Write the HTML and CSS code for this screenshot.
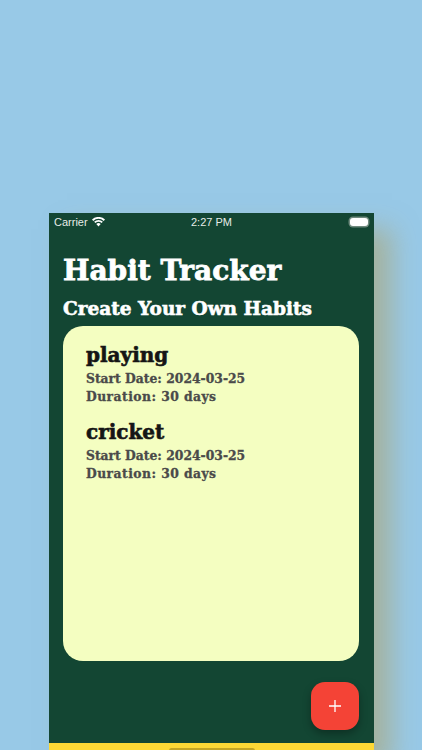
FILE: index.html
```html
<!DOCTYPE html>
<html lang="en">
<head>
<meta charset="utf-8">
<title>Habit Tracker</title>
<link rel="stylesheet" href="styles.css">
</head>
<body>
<main class="phone">
  <div class="status">
    <div class="status-left">
      <span>Carrier</span>
      <svg class="wifi" viewBox="0 0 14 10" width="13" height="10"><path d="M7 9.8 4.600 7.200a3.400 3.400 0 0 1 4.800 0zM3.700 6.200 2.300 4.700a6.800 6.800 0 0 1 9.400 0L10.300 6.200a4.800 4.800 0 0 0-6.600 0zM1.400 3.800 0 2.300a10.200 10.200 0 0 1 14 0L12.600 3.800a8.200 8.200 0 0 0-11.200 0z" fill="#fff"/></svg>
    </div>
    <span class="clock">2:27 PM</span>
    <div class="status-right"><span class="battery"></span></div>
  </div>
  <div class="content">
    <h1 class="title">Habit Tracker</h1>
    <h2 class="subtitle">Create Your Own Habits</h2>
    <section class="card">
      <article class="habit">
        <h3 class="habit-name">playing</h3>
        <p class="habit-line">Start Date: 2024-03-25</p>
        <p class="habit-line habit-duration">Duration: 30 days</p>
      </article>
      <article class="habit">
        <h3 class="habit-name">cricket</h3>
        <p class="habit-line">Start Date: 2024-03-25</p>
        <p class="habit-line habit-duration">Duration: 30 days</p>
      </article>
    </section>
    <div class="actions">
      <button class="fab" aria-label="Add habit"><svg viewBox="0 0 12 12" width="12" height="12"><path d="M6 0v12M0 6h12" stroke="#fff" stroke-width="1.300" fill="none"/></svg></button>
    </div>
  </div>
  <div class="bottom"><span class="home"></span></div>
</main>
</body>
</html>
```
FILE: styles.css
```css
* { box-sizing: border-box; }
html, body { margin: 0; height: 750px; overflow: hidden; }
body {
  background: #98c9e7;
  padding: 213px 48px 0 49px;
  font-family: "DejaVu Serif", serif;
}
.phone {
  width: 325px;
  height: 537px;
  background: #134633;
  display: flex;
  flex-direction: column;
  box-shadow: 18px 16px 24px rgba(170, 170, 130, 0.7);
}
.status {
  height: 18px;
  padding: 0 6px 0 5px;
  display: flex;
  align-items: center;
  justify-content: space-between;
  color: #e6ece8;
  font: 11px/18px "Liberation Sans", sans-serif;
  position: relative;
}
.status-left { display: flex; align-items: center; gap: 4px; }
.wifi { display: block; }
.clock { position: absolute; left: 142px; }
.battery {
  display: block;
  width: 18px;
  height: 8px;
  border-radius: 3px;
  background: #fff;
  box-shadow: 0 0 0 1.500px #6f8a7e;
}
.content {
  flex: 1;
  padding: 22px 15px 0 14px;
  display: flex;
  flex-direction: column;
}
.title {
  margin: 0;
  color: #fff;
  font-size: 28px;
  line-height: 36px;
  font-weight: 700;
  -webkit-text-stroke: 0.8px #fff;
}
.subtitle {
  margin: 6px 0 0;
  color: #fff;
  font-size: 18.500px;
  line-height: 28px;
  font-weight: 700;
  -webkit-text-stroke: 0.6px #fff;
}
.card {
  margin-top: 3px;
  height: 335px;
  background: #f4fec1;
  border-radius: 20px;
  padding: 17px 23px;
}
.habit { margin-bottom: 14px; }
.habit-name {
  margin: 0 0 3px;
  color: #151515;
  font-size: 20px;
  line-height: 24px;
  font-weight: 700;
  -webkit-text-stroke: 0.6px #151515;
}
.habit-line {
  margin: 0;
  color: #4a4a4a;
  font-size: 12.350px;
  line-height: 18px;
  font-weight: 700;
  -webkit-text-stroke: 0.3px #4a4a4a;
}
.habit-duration { letter-spacing: 0.45px; }
.actions {
  margin-top: 21px;
  display: flex;
  justify-content: flex-end;
}
.fab {
  width: 48px;
  height: 48px;
  border: 0;
  padding: 0;
  border-radius: 14px;
  background: #f44336;
  box-shadow: 0 4px 8px rgba(0, 0, 0, 0.3);
  display: flex;
  align-items: center;
  justify-content: center;
}
.bottom {
  height: 7px;
  margin-top: auto;
  background: #fdd835;
  display: flex;
  justify-content: center;
  padding-top: 5px;
  overflow: hidden;
}
.home {
  width: 86px;
  height: 5px;
  border-radius: 3px;
  background: #c4a524;
}
```
